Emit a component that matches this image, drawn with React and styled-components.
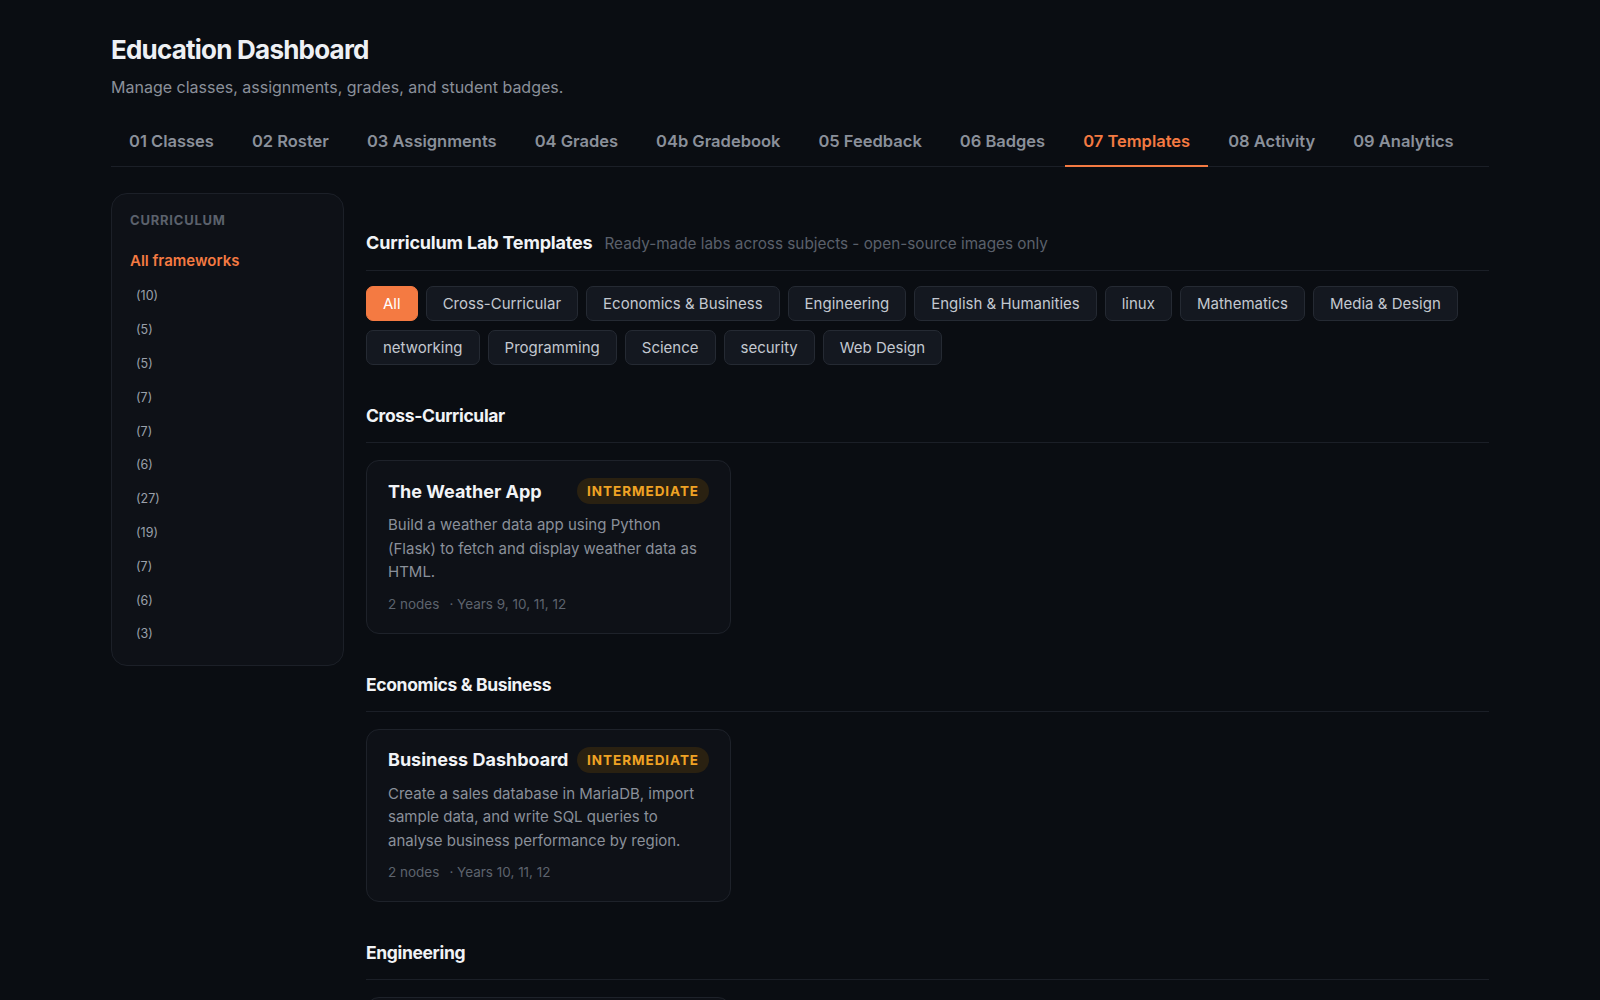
import React from 'react';
import styled, { createGlobalStyle } from 'styled-components';

const GlobalStyle = createGlobalStyle`
  * { box-sizing: border-box; }
  body {
    margin: 0;
    background: #0a0d12;
    color: #e8eaee;
    font-family: Inter, "Noto Sans", "Liberation Sans", sans-serif;
  }
`;

const Page = styled.div`
  max-width: 1440px;
  margin: 0 auto;
  padding: 34px 31px 40px;
`;

const Title = styled.h1`
  margin: 0;
  font-size: 26px;
  font-weight: 700;
  letter-spacing: -0.03em;
  color: #eef0f4;
  line-height: 32px;
`;

const Subtitle = styled.p`
  margin: 11px 0 0;
  font-size: 16px;
  color: #8a909a;
  line-height: 20px;
`;

const Tabs = styled.nav`
  display: flex;
  gap: 2px;
  margin-top: 24px;
  border-bottom: 1px solid #1b1f27;
`;

const Tab = styled.button`
  background: none;
  border: none;
  padding: 0 18px 4px;
  height: 46px;
  font-family: inherit;
  font-size: 16.5px;
  font-weight: 600;
  color: ${({ $active }) => ($active ? '#f47a42' : '#8a909a')};
  border-bottom: 2px solid ${({ $active }) => ($active ? '#f47a42' : 'transparent')};
  margin-bottom: -1px;
  cursor: pointer;
`;

const Layout = styled.div`
  display: grid;
  grid-template-columns: 233px 1fr;
  gap: 22px;
  margin-top: 26px;
  align-items: start;
`;

const Sidebar = styled.aside`
  background: #0e1117;
  border: 1px solid #1c2028;
  border-radius: 16px;
  padding: 17px 18px 14px;
`;

const SideLabel = styled.div`
  font-size: 13px;
  font-weight: 700;
  letter-spacing: 0.06em;
  color: #5b616c;
  line-height: 18px;
`;

const SideAll = styled.div`
  margin-top: 22px;
  font-size: 15px;
  font-weight: 600;
  color: #f47a42;
  line-height: 20px;
`;

const SideList = styled.ul`
  list-style: none;
  margin: 8px 0 0;
  padding: 0;
  display: flex;
  flex-direction: column;
`;

const SideItem = styled.li`
  padding: 0 6px;
  height: 33.8px;
  display: flex;
  align-items: center;
  font-size: 12.5px;
  color: #9aa0aa;
`;

const Main = styled.main`
  padding-top: 39px;
`;

const Header = styled.div`
  display: flex;
  align-items: baseline;
  gap: 12px;
  padding-bottom: 17px;
  border-bottom: 1px solid #1b1f27;
`;

const HeaderTitle = styled.h2`
  margin: 0;
  font-size: 18px;
  font-weight: 700;
  letter-spacing: -0.01em;
  color: #f1f3f6;
`;

const HeaderSub = styled.span`
  font-size: 15.3px;
  color: #5a606b;
`;

const Chips = styled.div`
  display: flex;
  flex-wrap: wrap;
  gap: 9px 8px;
  margin-top: 15px;
`;

const Chip = styled.button`
  height: 35px;
  padding: 0 16px;
  border-radius: 7px;
  font-family: inherit;
  font-size: 15px;
  border: 1px solid ${({ $active }) => ($active ? '#f47a42' : '#252a33')};
  background: ${({ $active }) => ($active ? '#f47a42' : '#141820')};
  color: ${({ $active }) => ($active ? '#ffffff' : '#c3c8d0')};
  cursor: pointer;
`;

const Section = styled.section`
  margin-top: 40px;
`;

const SectionTitle = styled.h3`
  margin: 0;
  font-size: 17.5px;
  font-weight: 700;
  letter-spacing: -0.02em;
  color: #f1f3f6;
  padding-bottom: 16px;
  border-bottom: 1px solid #1b1f27;
`;

const Grid = styled.div`
  display: grid;
  grid-template-columns: repeat(auto-fill, minmax(340px, 1fr));
  gap: 14px;
  margin-top: 17px;
`;

const Card = styled.div`
  background: #0e1117;
  border: 1px solid #1e222a;
  border-radius: 13px;
  padding: 17px 21px 21px;
`;

const CardHead = styled.div`
  display: flex;
  align-items: center;
  justify-content: space-between;
  gap: 8px;
`;

const CardTitle = styled.div`
  font-size: 18px;
  font-weight: 700;
  color: #f1f3f6;
`;

const Level = styled.span`
  flex-shrink: 0;
  height: 26px;
  padding: 0 10px;
  border-radius: 999px;
  background: #2a2111;
  color: #f0a324;
  font-size: 13.5px;
  font-weight: 700;
  letter-spacing: 0.07em;
  display: inline-flex;
  align-items: center;
`;

const Desc = styled.p`
  margin: 9px 0 0;
  font-size: 15px;
  line-height: 23.5px;
  color: #8a909a;
`;

const Meta = styled.div`
  margin-top: 12px;
  display: flex;
  gap: 10px;
  font-size: 13.5px;
  color: #5d636d;
`;

const tabs = ['01 Classes', '02 Roster', '03 Assignments', '04 Grades', '04b Gradebook', '05 Feedback', '06 Badges', '07 Templates', '08 Activity', '09 Analytics'];
const counts = [10, 5, 5, 7, 7, 6, 27, 19, 7, 6, 3];
const chips = ['All', 'Cross-Curricular', 'Economics & Business', 'Engineering', 'English & Humanities', 'linux', 'Mathematics', 'Media & Design', 'networking', 'Programming', 'Science', 'security', 'Web Design'];

const sections = [
  {
    name: 'Cross-Curricular',
    cards: [{ title: 'The Weather App', level: 'INTERMEDIATE', desc: 'Build a weather data app using Python (Flask) to fetch and display weather data as HTML.', nodes: 2, years: 'Years 9, 10, 11, 12' }],
  },
  {
    name: 'Economics & Business',
    cards: [{ title: 'Business Dashboard', level: 'INTERMEDIATE', desc: 'Create a sales database in MariaDB, import sample data, and write SQL queries to analyse business performance by region.', nodes: 2, years: 'Years 10, 11, 12' }],
  },
  {
    name: 'Engineering',
    cards: [{ title: 'Robot Arm Controller', level: 'INTERMEDIATE', desc: 'Program a simulated robot arm controller and test movement sequences.', nodes: 2, years: 'Years 10, 11, 12' }],
  },
];

export default function App() {
  return (
    <>
      <GlobalStyle />
      <Page>
        <Title>Education Dashboard</Title>
        <Subtitle>Manage classes, assignments, grades, and student badges.</Subtitle>
        <Tabs>
          {tabs.map((t) => (
            <Tab key={t} $active={t === '07 Templates'}>{t}</Tab>
          ))}
        </Tabs>
        <Layout>
          <Sidebar>
            <SideLabel>CURRICULUM</SideLabel>
            <SideAll>All frameworks</SideAll>
            <SideList>
              {counts.map((c, i) => (
                <SideItem key={i}>({c})</SideItem>
              ))}
            </SideList>
          </Sidebar>
          <Main>
            <Header>
              <HeaderTitle>Curriculum Lab Templates</HeaderTitle>
              <HeaderSub>Ready-made labs across subjects - open-source images only</HeaderSub>
            </Header>
            <Chips>
              {chips.map((c) => (
                <Chip key={c} $active={c === 'All'}>{c}</Chip>
              ))}
            </Chips>
            {sections.map((s) => (
              <Section key={s.name}>
                <SectionTitle>{s.name}</SectionTitle>
                <Grid>
                  {s.cards.map((c) => (
                    <Card key={c.title}>
                      <CardHead>
                        <CardTitle>{c.title}</CardTitle>
                        <Level>{c.level}</Level>
                      </CardHead>
                      <Desc>{c.desc}</Desc>
                      <Meta>
                        <span>{c.nodes} nodes</span>
                        <span>· {c.years}</span>
                      </Meta>
                    </Card>
                  ))}
                </Grid>
              </Section>
            ))}
          </Main>
        </Layout>
      </Page>
    </>
  );
}
